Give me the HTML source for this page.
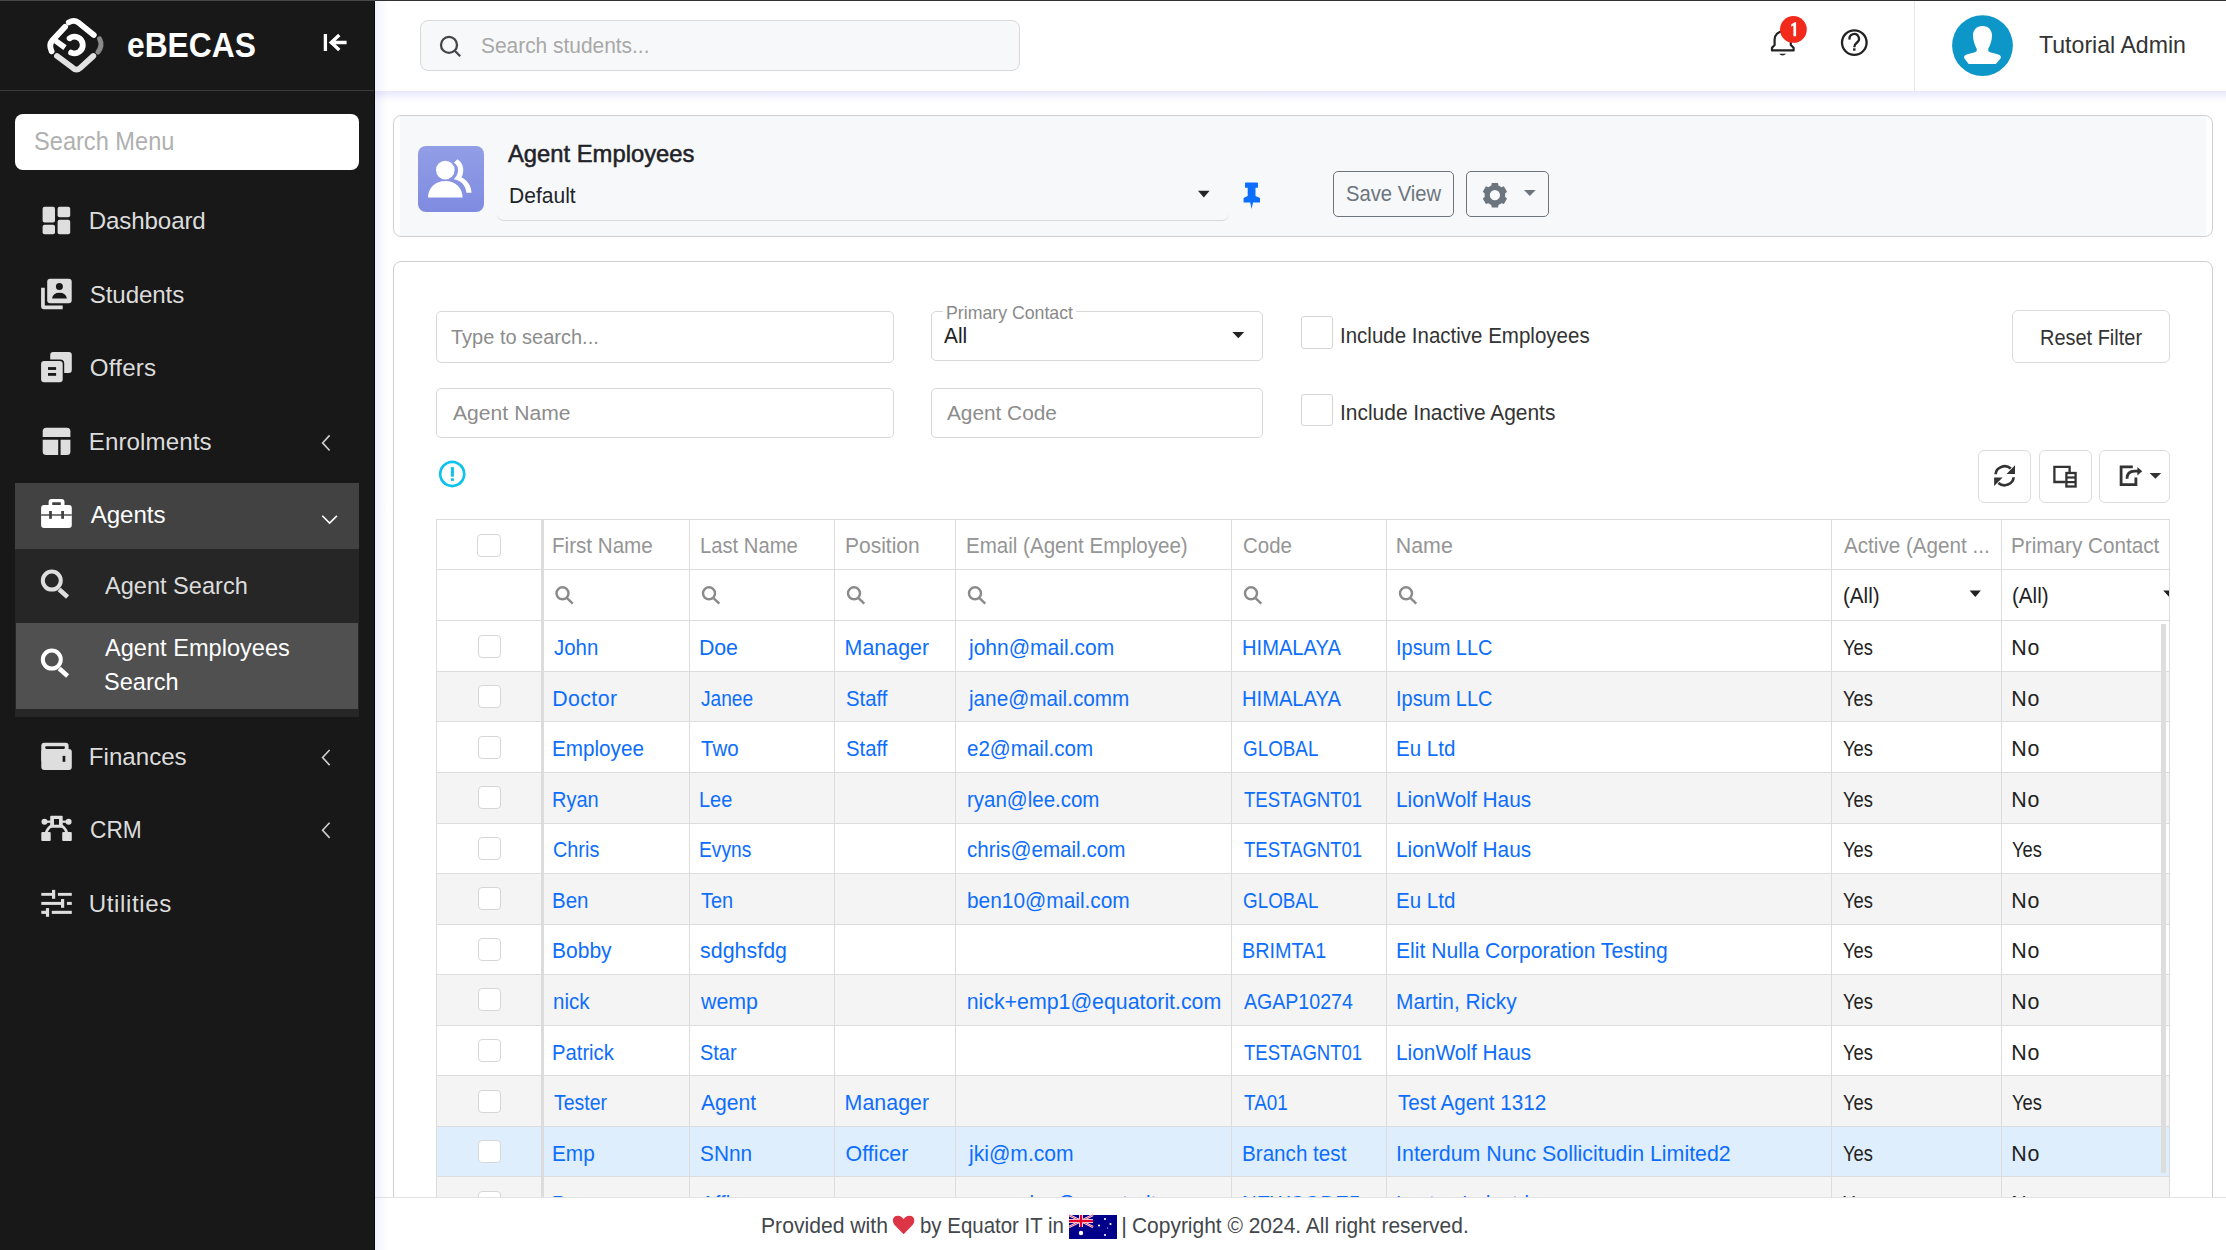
<!DOCTYPE html>
<html><head><meta charset="utf-8"><title>Agent Employees</title>
<style>
*{box-sizing:border-box;margin:0;padding:0}
html,body{width:2226px;height:1250px;overflow:hidden;background:#fff;font-family:"Liberation Sans",sans-serif}
.a{position:absolute}
.t{position:absolute;line-height:1;white-space:nowrap}
#clip{position:absolute;left:0;top:0;width:2226px;height:1197px;overflow:hidden}
#foot{position:absolute;left:375px;top:1197px;width:1851px;height:53px;background:#fff;border-top:1px solid #e3e3e3}
svg.ov{position:absolute;left:0;top:0;width:2226px;height:1250px}
</style></head><body>
<div class="a" style="left:0px;top:0px;width:375px;height:1250px;background:#181818"></div><div class="a" style="left:374px;top:0px;width:1px;height:1250px;background:#070707"></div><div class="a" style="left:0px;top:90px;width:374px;height:1px;background:#3a3a3a"></div><div class="a" style="left:15px;top:113.5px;width:344px;height:56.5px;background:#fff;border-radius:8px"></div><div class="a" style="left:15px;top:483px;width:344px;height:66px;background:#424242"></div><div class="a" style="left:15px;top:549px;width:344px;height:168px;background:#262626"></div><div class="a" style="left:16px;top:623px;width:342px;height:86px;background:#505050"></div><div class="a" style="left:375px;top:91px;width:12px;height:1159px;background:linear-gradient(to right,rgba(110,110,235,.11),rgba(110,110,235,0))"></div><div class="a" style="left:375px;top:91px;width:1851px;height:12px;background:linear-gradient(to bottom,rgba(110,110,235,.17),rgba(110,110,235,.04) 60%,rgba(110,110,235,0))"></div><div class="a" style="left:375px;top:0px;width:1851px;height:91px;background:#fff"></div><div class="a" style="left:375px;top:0px;width:12px;height:91px;background:linear-gradient(to right,rgba(110,110,235,.10),rgba(110,110,235,0))"></div><div class="a" style="left:0px;top:0px;width:375px;height:1px;background:#474747"></div><div class="a" style="left:375px;top:0px;width:1851px;height:1px;background:#303232"></div><div class="a" style="left:420px;top:20px;width:600px;height:51px;background:#f7f8fa;border:1px solid #d9d9d9;border-radius:8px"></div><div class="a" style="left:1914px;top:1px;width:1px;height:90px;background:#e8e8e8"></div><div class="a" style="left:393px;top:115px;width:1820px;height:122px;background:#fff;border:1px solid #cfcfcf;border-radius:8px"></div><div class="a" style="left:400px;top:116px;width:1806px;height:120px;background:#f7f8fa"></div><div class="a" style="left:418px;top:146px;width:66px;height:66px;background:linear-gradient(#929ee6,#7f8be0);border-radius:8px"></div><div class="a" style="left:497px;top:190px;width:732px;height:31px;border-bottom:1px solid #d8d8d8;border-radius:0 0 7px 7px"></div><div class="a" style="left:1333px;top:171px;width:121px;height:45.5px;border:1.2px solid #6c757d;border-radius:5px"></div><div class="a" style="left:1466px;top:171px;width:83px;height:45.5px;border:1.2px solid #6c757d;border-radius:5px"></div><div class="a" style="left:393px;top:261px;width:1820px;height:1039px;background:#fff;border:1px solid #cfcfcf;border-radius:8px"></div><div class="a" style="left:436px;top:310.5px;width:458px;height:52.0px;background:#fff;border:1px solid #d8d8d8;border-radius:5px"></div><div class="a" style="left:436px;top:387.5px;width:458px;height:50.0px;background:#fff;border:1px solid #d8d8d8;border-radius:5px"></div><div class="a" style="left:930.5px;top:310.5px;width:332.5px;height:50.0px;background:#fff;border:1px solid #d8d8d8;border-radius:5px"></div><div class="a" style="left:943px;top:300px;width:133px;height:15px;background:#fff"></div><div class="a" style="left:930.5px;top:387.5px;width:332.5px;height:50.0px;background:#fff;border:1px solid #d8d8d8;border-radius:5px"></div><div class="a" style="left:1300.5px;top:316px;width:32.0px;height:32.5px;background:#fff;border:1px solid #d4d4d4;border-radius:3px"></div><div class="a" style="left:1300.5px;top:393.5px;width:32.0px;height:32.0px;background:#fff;border:1px solid #d4d4d4;border-radius:3px"></div><div class="a" style="left:2012px;top:310px;width:158px;height:53px;background:#fff;border:1px solid #dcdcdc;border-radius:6px"></div><div class="a" style="left:1978px;top:450px;width:53px;height:53px;background:#fff;border:1px solid #dcdcdc;border-radius:6px"></div><div class="a" style="left:2039px;top:450px;width:53px;height:53px;background:#fff;border:1px solid #dcdcdc;border-radius:6px"></div><div class="a" style="left:2099px;top:450px;width:71px;height:53px;background:#fff;border:1px solid #dcdcdc;border-radius:6px"></div>
<div id="clip"><div class="a" style="left:436px;top:671px;width:1733px;height:50px;background:#f4f4f4"></div><div class="a" style="left:436px;top:772px;width:1733px;height:51px;background:#f4f4f4"></div><div class="a" style="left:436px;top:873px;width:1733px;height:51px;background:#f4f4f4"></div><div class="a" style="left:436px;top:974px;width:1733px;height:51px;background:#f4f4f4"></div><div class="a" style="left:436px;top:1075px;width:1733px;height:51px;background:#f4f4f4"></div><div class="a" style="left:436px;top:1126px;width:1733px;height:50px;background:#dfeefc"></div><div class="a" style="left:436px;top:1176px;width:1733px;height:51px;background:#f4f4f4"></div><div class="a" style="left:436px;top:519px;width:1734px;height:1px;background:#dcdcdc"></div><div class="a" style="left:436px;top:569px;width:1734px;height:1px;background:#dcdcdc"></div><div class="a" style="left:436px;top:620px;width:1734px;height:1px;background:#dcdcdc"></div><div class="a" style="left:436px;top:671px;width:1734px;height:1px;background:#dcdcdc"></div><div class="a" style="left:436px;top:721px;width:1734px;height:1px;background:#dcdcdc"></div><div class="a" style="left:436px;top:772px;width:1734px;height:1px;background:#dcdcdc"></div><div class="a" style="left:436px;top:823px;width:1734px;height:1px;background:#dcdcdc"></div><div class="a" style="left:436px;top:873px;width:1734px;height:1px;background:#dcdcdc"></div><div class="a" style="left:436px;top:924px;width:1734px;height:1px;background:#dcdcdc"></div><div class="a" style="left:436px;top:974px;width:1734px;height:1px;background:#dcdcdc"></div><div class="a" style="left:436px;top:1025px;width:1734px;height:1px;background:#dcdcdc"></div><div class="a" style="left:436px;top:1075px;width:1734px;height:1px;background:#dcdcdc"></div><div class="a" style="left:436px;top:1126px;width:1734px;height:1px;background:#dcdcdc"></div><div class="a" style="left:436px;top:1176px;width:1734px;height:1px;background:#dcdcdc"></div><div class="a" style="left:436px;top:1227px;width:1734px;height:1px;background:#dcdcdc"></div><div class="a" style="left:436px;top:519px;width:1px;height:781px;background:#dcdcdc"></div><div class="a" style="left:541px;top:519px;width:1px;height:781px;background:#dcdcdc"></div><div class="a" style="left:689px;top:519px;width:1px;height:781px;background:#dcdcdc"></div><div class="a" style="left:834px;top:519px;width:1px;height:781px;background:#dcdcdc"></div><div class="a" style="left:955px;top:519px;width:1px;height:781px;background:#dcdcdc"></div><div class="a" style="left:1231px;top:519px;width:1px;height:781px;background:#dcdcdc"></div><div class="a" style="left:1386px;top:519px;width:1px;height:781px;background:#dcdcdc"></div><div class="a" style="left:1831px;top:519px;width:1px;height:781px;background:#dcdcdc"></div><div class="a" style="left:2001px;top:519px;width:1px;height:781px;background:#dcdcdc"></div><div class="a" style="left:2169px;top:519px;width:1px;height:781px;background:#dcdcdc"></div><div class="a" style="left:541px;top:519px;width:2.5px;height:781px;background:#dcdcdc"></div><div class="a" style="left:477px;top:533.5px;width:24px;height:23.5px;background:#fff;border:1px solid #d6d6d6;border-radius:4px"></div><div class="a" style="left:477.5px;top:634.6px;width:23.0px;height:23.0px;background:#fff;border:1px solid #d6d6d6;border-radius:4px"></div><div class="a" style="left:477.5px;top:685.1px;width:23.0px;height:23.0px;background:#fff;border:1px solid #d6d6d6;border-radius:4px"></div><div class="a" style="left:477.5px;top:735.7px;width:23.0px;height:23.0px;background:#fff;border:1px solid #d6d6d6;border-radius:4px"></div><div class="a" style="left:477.5px;top:786.2px;width:23.0px;height:23.0px;background:#fff;border:1px solid #d6d6d6;border-radius:4px"></div><div class="a" style="left:477.5px;top:836.8px;width:23.0px;height:23.0px;background:#fff;border:1px solid #d6d6d6;border-radius:4px"></div><div class="a" style="left:477.5px;top:887.3px;width:23.0px;height:23.0px;background:#fff;border:1px solid #d6d6d6;border-radius:4px"></div><div class="a" style="left:477.5px;top:937.9px;width:23.0px;height:23.0px;background:#fff;border:1px solid #d6d6d6;border-radius:4px"></div><div class="a" style="left:477.5px;top:988.4px;width:23.0px;height:23.0px;background:#fff;border:1px solid #d6d6d6;border-radius:4px"></div><div class="a" style="left:477.5px;top:1039.0px;width:23.0px;height:23.0px;background:#fff;border:1px solid #d6d6d6;border-radius:4px"></div><div class="a" style="left:477.5px;top:1089.5px;width:23.0px;height:23.0px;background:#fff;border:1px solid #d6d6d6;border-radius:4px"></div><div class="a" style="left:477.5px;top:1140.0px;width:23.0px;height:23.0px;background:#fff;border:1px solid #d6d6d6;border-radius:4px"></div><div class="a" style="left:477.5px;top:1190.6px;width:23.0px;height:23.0px;background:#fff;border:1px solid #d6d6d6;border-radius:4px"></div><div class="a" style="left:2160.5px;top:624px;width:5.5px;height:549px;background:#dddddd"></div><div class="t" style="left:554.20px;top:638.14px;font-size:21.37px;color:#0d6efd;transform:scaleX(0.9556);transform-origin:0 0;">John</div><div class="t" style="left:699.00px;top:638.14px;font-size:21.37px;color:#0d6efd;letter-spacing:-0.100px;">Doe</div><div class="t" style="left:844.60px;top:638.14px;font-size:21.37px;color:#0d6efd;letter-spacing:0.033px;">Manager</div><div class="t" style="left:968.68px;top:638.14px;font-size:21.37px;color:#0d6efd;transform:scaleX(0.9844);transform-origin:0 0;">john@mail.com</div><div class="t" style="left:1241.61px;top:638.14px;font-size:21.37px;color:#0d6efd;transform:scaleX(0.9427);transform-origin:0 0;">HIMALAYA</div><div class="t" style="left:1396.23px;top:638.14px;font-size:21.37px;color:#0d6efd;transform:scaleX(0.9340);transform-origin:0 0;">Ipsum LLC</div><div class="t" style="left:1842.64px;top:638.14px;font-size:21.37px;color:#222;transform:scaleX(0.8576);transform-origin:0 0;">Yes</div><div class="t" style="left:2011.30px;top:638.14px;font-size:21.37px;color:#222;letter-spacing:0.800px;">No</div><div class="t" style="left:552.20px;top:688.68px;font-size:21.37px;color:#0d6efd;letter-spacing:0.400px;">Doctor</div><div class="t" style="left:701.00px;top:688.68px;font-size:21.37px;color:#0d6efd;transform:scaleX(0.8947);transform-origin:0 0;">Janee</div><div class="t" style="left:845.65px;top:688.68px;font-size:21.37px;color:#0d6efd;transform:scaleX(0.9512);transform-origin:0 0;">Staff</div><div class="t" style="left:968.67px;top:688.68px;font-size:21.37px;color:#0d6efd;transform:scaleX(0.9697);transform-origin:0 0;">jane@mail.comm</div><div class="t" style="left:1241.61px;top:688.68px;font-size:21.37px;color:#0d6efd;transform:scaleX(0.9427);transform-origin:0 0;">HIMALAYA</div><div class="t" style="left:1396.23px;top:688.68px;font-size:21.37px;color:#0d6efd;transform:scaleX(0.9340);transform-origin:0 0;">Ipsum LLC</div><div class="t" style="left:1842.64px;top:688.68px;font-size:21.37px;color:#222;transform:scaleX(0.8576);transform-origin:0 0;">Yes</div><div class="t" style="left:2011.30px;top:688.68px;font-size:21.37px;color:#222;letter-spacing:0.800px;">No</div><div class="t" style="left:552.27px;top:739.23px;font-size:21.37px;color:#0d6efd;transform:scaleX(0.9674);transform-origin:0 0;">Employee</div><div class="t" style="left:701.00px;top:739.23px;font-size:21.37px;color:#0d6efd;transform:scaleX(0.9605);transform-origin:0 0;">Two</div><div class="t" style="left:845.65px;top:739.23px;font-size:21.37px;color:#0d6efd;transform:scaleX(0.9512);transform-origin:0 0;">Staff</div><div class="t" style="left:966.74px;top:739.23px;font-size:21.37px;color:#0d6efd;transform:scaleX(0.9628);transform-origin:0 0;">e2@mail.com</div><div class="t" style="left:1242.62px;top:739.23px;font-size:21.37px;color:#0d6efd;transform:scaleX(0.8821);transform-origin:0 0;">GLOBAL</div><div class="t" style="left:1396.18px;top:739.23px;font-size:21.37px;color:#0d6efd;transform:scaleX(0.9603);transform-origin:0 0;">Eu Ltd</div><div class="t" style="left:1842.64px;top:739.23px;font-size:21.37px;color:#222;transform:scaleX(0.8576);transform-origin:0 0;">Yes</div><div class="t" style="left:2011.30px;top:739.23px;font-size:21.37px;color:#222;letter-spacing:0.800px;">No</div><div class="t" style="left:552.33px;top:789.77px;font-size:21.37px;color:#0d6efd;transform:scaleX(0.9362);transform-origin:0 0;">Ryan</div><div class="t" style="left:699.13px;top:789.77px;font-size:21.37px;color:#0d6efd;transform:scaleX(0.9333);transform-origin:0 0;">Lee</div><div class="t" style="left:966.74px;top:789.77px;font-size:21.37px;color:#0d6efd;transform:scaleX(0.9596);transform-origin:0 0;">ryan@lee.com</div><div class="t" style="left:1243.50px;top:789.77px;font-size:21.37px;color:#0d6efd;transform:scaleX(0.8681);transform-origin:0 0;">TESTAGNT01</div><div class="t" style="left:1396.15px;top:789.77px;font-size:21.37px;color:#0d6efd;transform:scaleX(0.9757);transform-origin:0 0;">LionWolf Haus</div><div class="t" style="left:1842.64px;top:789.77px;font-size:21.37px;color:#222;transform:scaleX(0.8576);transform-origin:0 0;">Yes</div><div class="t" style="left:2011.30px;top:789.77px;font-size:21.37px;color:#222;letter-spacing:0.800px;">No</div><div class="t" style="left:553.27px;top:840.32px;font-size:21.37px;color:#0d6efd;transform:scaleX(0.9292);transform-origin:0 0;">Chris</div><div class="t" style="left:699.20px;top:840.32px;font-size:21.37px;color:#0d6efd;transform:scaleX(0.8982);transform-origin:0 0;">Evyns</div><div class="t" style="left:966.74px;top:840.32px;font-size:21.37px;color:#0d6efd;transform:scaleX(0.9648);transform-origin:0 0;">chris@email.com</div><div class="t" style="left:1243.50px;top:840.32px;font-size:21.37px;color:#0d6efd;transform:scaleX(0.8681);transform-origin:0 0;">TESTAGNT01</div><div class="t" style="left:1396.15px;top:840.32px;font-size:21.37px;color:#0d6efd;transform:scaleX(0.9757);transform-origin:0 0;">LionWolf Haus</div><div class="t" style="left:1842.64px;top:840.32px;font-size:21.37px;color:#222;transform:scaleX(0.8576);transform-origin:0 0;">Yes</div><div class="t" style="left:2012.44px;top:840.32px;font-size:21.37px;color:#222;transform:scaleX(0.8576);transform-origin:0 0;">Yes</div><div class="t" style="left:552.28px;top:890.86px;font-size:21.37px;color:#0d6efd;transform:scaleX(0.9600);transform-origin:0 0;">Ben</div><div class="t" style="left:701.00px;top:890.86px;font-size:21.37px;color:#0d6efd;transform:scaleX(0.9333);transform-origin:0 0;">Ten</div><div class="t" style="left:966.72px;top:890.86px;font-size:21.37px;color:#0d6efd;transform:scaleX(0.9774);transform-origin:0 0;">ben10@mail.com</div><div class="t" style="left:1242.62px;top:890.86px;font-size:21.37px;color:#0d6efd;transform:scaleX(0.8821);transform-origin:0 0;">GLOBAL</div><div class="t" style="left:1396.18px;top:890.86px;font-size:21.37px;color:#0d6efd;transform:scaleX(0.9603);transform-origin:0 0;">Eu Ltd</div><div class="t" style="left:1842.64px;top:890.86px;font-size:21.37px;color:#222;transform:scaleX(0.8576);transform-origin:0 0;">Yes</div><div class="t" style="left:2011.30px;top:890.86px;font-size:21.37px;color:#222;letter-spacing:0.800px;">No</div><div class="t" style="left:552.23px;top:941.41px;font-size:21.37px;color:#0d6efd;transform:scaleX(0.9847);transform-origin:0 0;">Bobby</div><div class="t" style="left:700.00px;top:941.41px;font-size:21.37px;color:#0d6efd;letter-spacing:0.043px;">sdghsfdg</div><div class="t" style="left:1241.65px;top:941.41px;font-size:21.37px;color:#0d6efd;transform:scaleX(0.9273);transform-origin:0 0;">BRIMTA1</div><div class="t" style="left:1396.12px;top:941.41px;font-size:21.37px;color:#0d6efd;transform:scaleX(0.9879);transform-origin:0 0;">Elit Nulla Corporation Testing</div><div class="t" style="left:1842.64px;top:941.41px;font-size:21.37px;color:#222;transform:scaleX(0.8576);transform-origin:0 0;">Yes</div><div class="t" style="left:2011.30px;top:941.41px;font-size:21.37px;color:#222;letter-spacing:0.800px;">No</div><div class="t" style="left:553.24px;top:991.95px;font-size:21.37px;color:#0d6efd;transform:scaleX(0.9595);transform-origin:0 0;">nick</div><div class="t" style="left:701.00px;top:991.95px;font-size:21.37px;color:#0d6efd;">wemp</div><div class="t" style="left:966.70px;top:991.95px;font-size:21.37px;color:#0d6efd;letter-spacing:-0.018px;">nick+emp1@equatorit.com</div><div class="t" style="left:1243.50px;top:991.95px;font-size:21.37px;color:#0d6efd;transform:scaleX(0.9161);transform-origin:0 0;">AGAP10274</div><div class="t" style="left:1396.15px;top:991.95px;font-size:21.37px;color:#0d6efd;transform:scaleX(0.9769);transform-origin:0 0;">Martin, Ricky</div><div class="t" style="left:1842.64px;top:991.95px;font-size:21.37px;color:#222;transform:scaleX(0.8576);transform-origin:0 0;">Yes</div><div class="t" style="left:2011.30px;top:991.95px;font-size:21.37px;color:#222;letter-spacing:0.800px;">No</div><div class="t" style="left:552.30px;top:1042.50px;font-size:21.37px;color:#0d6efd;transform:scaleX(0.9476);transform-origin:0 0;">Patrick</div><div class="t" style="left:700.07px;top:1042.50px;font-size:21.37px;color:#0d6efd;transform:scaleX(0.9342);transform-origin:0 0;">Star</div><div class="t" style="left:1243.50px;top:1042.50px;font-size:21.37px;color:#0d6efd;transform:scaleX(0.8681);transform-origin:0 0;">TESTAGNT01</div><div class="t" style="left:1396.15px;top:1042.50px;font-size:21.37px;color:#0d6efd;transform:scaleX(0.9757);transform-origin:0 0;">LionWolf Haus</div><div class="t" style="left:1842.64px;top:1042.50px;font-size:21.37px;color:#222;transform:scaleX(0.8576);transform-origin:0 0;">Yes</div><div class="t" style="left:2011.30px;top:1042.50px;font-size:21.37px;color:#222;letter-spacing:0.800px;">No</div><div class="t" style="left:554.20px;top:1093.04px;font-size:21.37px;color:#0d6efd;transform:scaleX(0.9103);transform-origin:0 0;">Tester</div><div class="t" style="left:701.00px;top:1093.04px;font-size:21.37px;color:#0d6efd;transform:scaleX(0.9893);transform-origin:0 0;">Agent</div><div class="t" style="left:844.60px;top:1093.04px;font-size:21.37px;color:#0d6efd;letter-spacing:0.033px;">Manager</div><div class="t" style="left:1243.50px;top:1093.04px;font-size:21.37px;color:#0d6efd;transform:scaleX(0.8837);transform-origin:0 0;">TA01</div><div class="t" style="left:1398.10px;top:1093.04px;font-size:21.37px;color:#0d6efd;transform:scaleX(0.9678);transform-origin:0 0;">Test Agent 1312</div><div class="t" style="left:1842.64px;top:1093.04px;font-size:21.37px;color:#222;transform:scaleX(0.8576);transform-origin:0 0;">Yes</div><div class="t" style="left:2012.44px;top:1093.04px;font-size:21.37px;color:#222;transform:scaleX(0.8576);transform-origin:0 0;">Yes</div><div class="t" style="left:552.25px;top:1143.59px;font-size:21.37px;color:#0d6efd;transform:scaleX(0.9732);transform-origin:0 0;">Emp</div><div class="t" style="left:700.03px;top:1143.59px;font-size:21.37px;color:#0d6efd;transform:scaleX(0.9745);transform-origin:0 0;">SNnn</div><div class="t" style="left:845.60px;top:1143.59px;font-size:21.37px;color:#0d6efd;letter-spacing:0.050px;">Officer</div><div class="t" style="left:968.69px;top:1143.59px;font-size:21.37px;color:#0d6efd;transform:scaleX(0.9877);transform-origin:0 0;">jki@m.com</div><div class="t" style="left:1241.57px;top:1143.59px;font-size:21.37px;color:#0d6efd;transform:scaleX(0.9660);transform-origin:0 0;">Branch test</div><div class="t" style="left:1396.10px;top:1143.59px;font-size:21.37px;color:#0d6efd;letter-spacing:-0.006px;">Interdum Nunc Sollicitudin Limited2</div><div class="t" style="left:1842.64px;top:1143.59px;font-size:21.37px;color:#222;transform:scaleX(0.8576);transform-origin:0 0;">Yes</div><div class="t" style="left:2011.30px;top:1143.59px;font-size:21.37px;color:#222;letter-spacing:0.800px;">No</div><div class="t" style="left:552.28px;top:1194.13px;font-size:21.37px;color:#0d6efd;transform:scaleX(0.9583);transform-origin:0 0;">Peppa</div><div class="t" style="left:701.00px;top:1194.13px;font-size:21.37px;color:#0d6efd;transform:scaleX(0.9583);transform-origin:0 0;">Afflex</div><div class="t" style="left:966.74px;top:1194.13px;font-size:21.37px;color:#0d6efd;transform:scaleX(0.9583);transform-origin:0 0;">peppa.lex@equatorit.com</div><div class="t" style="left:1241.58px;top:1194.13px;font-size:21.37px;color:#0d6efd;transform:scaleX(0.9583);transform-origin:0 0;">NEWCODE5</div><div class="t" style="left:1396.18px;top:1194.13px;font-size:21.37px;color:#0d6efd;transform:scaleX(0.9583);transform-origin:0 0;">Lectus Industries</div><div class="t" style="left:1842.64px;top:1194.13px;font-size:21.37px;color:#222;transform:scaleX(0.8576);transform-origin:0 0;">Yes</div><div class="t" style="left:2011.30px;top:1194.13px;font-size:21.37px;color:#222;letter-spacing:0.800px;">No</div></div>
<svg class="ov" width="2226" height="1250" viewBox="0 0 2226 1250"><g fill="none" stroke-linecap="round" stroke-width="5.8"><path d="M68.8 22.4 Q74 19.2 78.3 22.6 L93.8 35" stroke="#fff"/><path d="M99.6 38.8 Q103 45.3 98 52" stroke="#8a8a8a" stroke-width="5"/><path d="M93.3 56 L80.3 67.8 Q76.5 71.3 72.7 67.8 L57 56" stroke="#e2e2e2"/><path d="M65.1 26.8 L52.3 40.5 Q48.6 44.8 51.6 51.3" stroke="#fff"/><path d="M55.5 40.8 L65 47.6" stroke="#fff" stroke-linecap="butt" stroke-width="5.6"/><path d="M69.6 38.3 A8.3 8.3 0 1 1 71.1 52.6" stroke="#fff"/></g><g stroke="#fff" stroke-width="3.3" fill="none"><path d="M325.4 34 V51"/><path d="M339.3 35 L331.2 42.5 L339.3 50 M331 42.5 H346.6"/></g><g fill="#dedede"><rect x="42.6" y="206.8" width="12.4" height="15.6" rx="2"/><rect x="57.6" y="206.8" width="12.6" height="10.4" rx="2"/><rect x="42.6" y="224.8" width="12.4" height="9.4" rx="2"/><rect x="57.6" y="219.7" width="12.6" height="14.5" rx="2"/></g><g fill="#dedede"><rect x="47.2" y="278.8" width="24.5" height="24.5" rx="3"/><path d="M41.1 287.8 H44.8 V305.6 H62.7 V309.2 H44 Q41.1 309.2 41.1 306.3 Z"/></g><g fill="#181818"><circle cx="59.4" cy="286.6" r="3.5"/><path d="M52 298.6 Q53 292.8 59.45 292.8 Q65.9 292.8 66.9 298.6 Z"/></g><rect x="50.2" y="352" width="21.6" height="21" rx="3" fill="#dedede"/><rect x="39.6" y="359.5" width="24.6" height="24.2" rx="4" fill="#181818"/><rect x="41.1" y="361" width="21.6" height="21.2" rx="3" fill="#dedede"/><g fill="#181818"><rect x="48" y="367.1" width="8.1" height="2.8"/><rect x="48" y="373" width="8.1" height="2.8"/></g><g fill="#dedede"><path d="M42.7 437 V431.3 Q42.7 427.8 46.2 427.8 H66.9 Q70.4 427.8 70.4 431.3 V437 Z"/><path d="M42.7 439.8 H58.2 V455 H46.2 Q42.7 455 42.7 451.5 Z"/><path d="M60.6 439.8 H70.4 V451.5 Q70.4 455 66.9 455 H60.6 Z"/></g><g fill="#fff"><path d="M48.6 505 V502 Q48.6 499 51.6 499 H61.5 Q64.5 499 64.5 502 V505 H60.8 V502.2 H52.2 V505 Z"/><rect x="41.1" y="504.9" width="30.7" height="23.1" rx="3"/></g><g fill="#5a5a5a"><rect x="41.1" y="514.2" width="30.7" height="1.6"/></g><g fill="#424242"><rect x="49.1" y="511" width="2.8" height="7.8"/><rect x="61.2" y="511" width="2.8" height="7.8"/></g><g stroke="#dedede" fill="none"><circle cx="51.8" cy="580.6" r="9" stroke-width="4"/><path d="M59.2 589.6 L67.6 597" stroke-width="4.6"/></g><g stroke="#fff" fill="none"><circle cx="51.8" cy="659.6" r="9" stroke-width="4"/><path d="M59.2 668.6 L67.6 676" stroke-width="4.6"/></g><g fill="#dedede"><rect x="41.3" y="742.8" width="27.3" height="20" rx="3"/><rect x="41.3" y="749" width="30.5" height="21" rx="3"/></g><g fill="#181818"><rect x="45.2" y="746.3" width="19.8" height="2.6" rx="1.3"/><rect x="62.6" y="755.9" width="2.7" height="5.9"/></g><g fill="#dedede"><rect x="50.2" y="815.8" width="12.5" height="12" rx="1"/><circle cx="44.5" cy="821.7" r="3"/><circle cx="68.6" cy="821.7" r="3"/><rect x="44.5" y="820.6" width="24" height="2.2"/><rect x="41.3" y="832" width="9.4" height="9" rx="1"/><rect x="62.2" y="832" width="9.6" height="9" rx="1"/></g><rect x="54" y="819" width="5" height="5.7" fill="#181818"/><g stroke="#dedede" stroke-width="2.6" fill="none"><path d="M52 825.5 Q47.5 828 46 833"/><path d="M61 825.5 Q65.5 828 67 833"/></g><g fill="#dedede"><rect x="41.3" y="892.9" width="11" height="2.9"/><rect x="52" y="889.9" width="3.2" height="8.9"/><rect x="57.9" y="892.9" width="13.9" height="2.9"/><rect x="41.3" y="901.9" width="20" height="3"/><rect x="61" y="899" width="3.2" height="8.8"/><rect x="66.9" y="901.9" width="4.9" height="3"/><rect x="41.3" y="910.8" width="5" height="3.1"/><rect x="45.9" y="908.1" width="3.2" height="8.7"/><rect x="51.8" y="910.8" width="20" height="3.1"/></g><path d="M329.6 435.4 L322.6 442.9 L329.6 450.5" stroke="#d0d0d0" stroke-width="1.6" fill="none"/><path d="M329.6 750.0 L322.6 757.5 L329.6 765.1" stroke="#d0d0d0" stroke-width="1.6" fill="none"/><path d="M329.6 822.8 L322.6 830.3 L329.6 837.9" stroke="#d0d0d0" stroke-width="1.6" fill="none"/><path d="M322.3 515.8 L329.6 523.1 L336.9 515.9" stroke="#fff" stroke-width="1.6" fill="none"/><g stroke="#41464b" fill="none" stroke-width="2.3"><circle cx="449" cy="44.9" r="8"/><path d="M454.8 50.8 L460.2 56.2"/></g><g stroke="#222" stroke-width="2.2" fill="none" stroke-linejoin="round"><path d="M1772 50.4 H1793.6 V47.8 L1790.8 45 V39.5 A8.1 8.1 0 0 0 1774.6 39.5 V45 L1772 47.8 Z"/></g><path d="M1779 53.8 Q1782.6 57.4 1786.2 53.8 Z" fill="#222"/><circle cx="1793.4" cy="29.4" r="13.4" fill="#f22a1c"/><path d="M1791.2 24.5 L1794.6 22.2 H1796.1 V36.3 H1793.4 V25.6 L1791.2 26.8 Z" fill="#fff"/><g stroke="#222" stroke-width="2.3" fill="none"><circle cx="1854.3" cy="42.6" r="12.3"/><path d="M1849.6 39.6 A4.7 4.7 0 1 1 1857 42.5 Q1854.3 44.6 1854.3 47.3"/></g><rect x="1853.1" y="48.3" width="2.4" height="2.4" fill="#222"/><circle cx="1982.5" cy="45.6" r="30.4" fill="#0d96c8"/><path fill="#fff" d="M1982.5 25.9 C1976.5 25.9 1973 30 1973 35.5 C1973 40 1974.5 44.5 1976.8 49 L1976.6 51.2 C1974 53 1968.5 53.6 1965.6 55 C1964.2 55.8 1963.8 57.3 1964.3 58.2 L1968.7 64 H1995.9 L2000.7 58.2 C2001.2 57.3 2000.8 55.8 1999.4 55 C1996.5 53.6 1991 53 1988.4 51.2 L1988.2 49 C1990.5 44.5 1992 40 1992 35.5 C1992 30 1988.5 25.9 1982.5 25.9 Z"/><g fill="#fff"><circle cx="445.3" cy="170.1" r="9.3"/><path d="M428 197.6 C428 188 435 181 445.3 181 C455.6 181 462.6 188 462.6 197.6 Z"/><path d="M457.4 159.2 C461 161.5 463.4 165.5 463.2 170.3 C463.1 173.5 462.4 175.6 461.5 177.3 C467.3 180.3 471.3 185.8 471.5 192.8 L466.4 192.8 C465.8 185.5 460.8 180 453.6 179.3 C456.6 176.8 458.2 173.5 458.1 170.1 C458 166.6 456.5 164.2 453.9 162.7 Z"/></g><path d="M1198 190.7 H1209.6 L1203.8 197.4 Z" fill="#212529"/><path fill="#0d6efd" d="M1246 182.5 H1257 Q1258 182.5 1258 183.5 V187.7 H1255.5 V196 L1260 198 V202.4 H1253 L1251.6 209 L1250.2 202.4 H1243.6 V198 L1247.7 196 V187.7 H1245 V183.5 Q1245 182.5 1246 182.5 Z"/><path fill="#6c757d" fill-rule="evenodd" d="M1491.34 185.43 L1491.75 183.00 L1498.05 183.00 L1498.46 185.43 L1501.58 187.23 L1503.89 186.37 L1507.04 191.83 L1505.14 193.39 L1505.14 197.01 L1507.04 198.57 L1503.89 204.03 L1501.58 203.17 L1498.46 204.97 L1498.05 207.40 L1491.75 207.40 L1491.34 204.97 L1488.22 203.17 L1485.91 204.03 L1482.76 198.57 L1484.66 197.01 L1484.66 193.39 L1482.76 191.83 L1485.91 186.37 L1488.22 187.23 Z M1500.0 195.2 A5.1 5.1 0 1 0 1489.8000000000002 195.2 A5.1 5.1 0 1 0 1500.0 195.2 Z"/><path d="M1523.9 190 H1535.7 L1529.8 195.9 Z" fill="#6c757d"/><path d="M1232.4 332 H1244.2 L1238.3 338.2 Z" fill="#222"/><g fill="#0dc2ec"><path fill-rule="evenodd" d="M452.2 460.6 A13.4 13.4 0 1 1 452.19 460.6 Z M452.2 463.3 A10.7 10.7 0 1 0 452.21 463.3 Z"/><rect x="450.9" y="467.1" width="3" height="9.6"/><rect x="450.9" y="478.3" width="3" height="2.6"/></g><g stroke="#333" stroke-width="2.7" fill="none"><path d="M1995.6 474.2 A9 8.3 0 0 1 2010.8 468.6"/><path d="M2013.6 477.3 A9 8.3 0 0 1 1998.4 482.9"/></g><g fill="#333"><path d="M2015 465.3 V474 H2006.5 Z"/><path d="M1994.1 486.1 V477.4 H2002.6 Z"/></g><g stroke="#333" stroke-width="2.3" fill="none"><path d="M2065.5 482 H2054.4 V466.8 H2069.6 V472.5"/><rect x="2066.4" y="473" width="9.2" height="13.5"/></g><g fill="#333"><rect x="2066.4" y="476.4" width="9.2" height="2.2"/><rect x="2066.4" y="481" width="9.2" height="2.2"/></g><g stroke="#333" stroke-width="2.8" fill="none"><path d="M2132.8 466.9 H2121.1 V484.7 H2135.9 V477.6"/><path d="M2127 478.7 Q2127 471.2 2134.8 471.2 H2139"/></g><path d="M2137.4 467 L2142.2 471.3 L2137.4 475.6 Z" fill="#333"/><path d="M2149.6 473 H2161.2 L2155.4 478.7 Z" fill="#333"/><g stroke="#8a8a8a" stroke-width="2.4" fill="none"><circle cx="562.5" cy="593.3" r="6"/><path d="M567.0 598.1 L572.8 603.6"/></g><g stroke="#8a8a8a" stroke-width="2.4" fill="none"><circle cx="709" cy="593.3" r="6"/><path d="M713.5 598.1 L719.3 603.6"/></g><g stroke="#8a8a8a" stroke-width="2.4" fill="none"><circle cx="854" cy="593.3" r="6"/><path d="M858.5 598.1 L864.3 603.6"/></g><g stroke="#8a8a8a" stroke-width="2.4" fill="none"><circle cx="975" cy="593.3" r="6"/><path d="M979.5 598.1 L985.3 603.6"/></g><g stroke="#8a8a8a" stroke-width="2.4" fill="none"><circle cx="1251" cy="593.3" r="6"/><path d="M1255.5 598.1 L1261.3 603.6"/></g><g stroke="#8a8a8a" stroke-width="2.4" fill="none"><circle cx="1406" cy="593.3" r="6"/><path d="M1410.5 598.1 L1416.3 603.6"/></g><path d="M1969.6 590.5 H1980.9 L1975.25 597 Z" fill="#222"/><path d="M2163.2 590.5 H2169 V596.7 Z" fill="#222"/></svg>
<div id="foot"></div><div class="a" style="left:375px;top:1197px;width:12px;height:53px;background:linear-gradient(to right,rgba(110,110,235,.10),rgba(110,110,235,0))"></div>
<svg class="ov" width="2226" height="1250" viewBox="0 0 2226 1250"><path fill="#dc3545" d="M903.6 1234.2 L894.6 1225 Q892.9 1223 892.9 1220.7 Q892.9 1215.7 898 1215.7 Q901.6 1215.7 903.6 1219.3 Q905.6 1215.7 909.2 1215.7 Q914.3 1215.7 914.3 1220.7 Q914.3 1223 912.6 1225 Z"/><rect x="1069" y="1215" width="48" height="24" fill="#00008b"/><g><rect x="1069" y="1215" width="24" height="12" fill="#00008b"/><path d="M1069 1215 L1093 1227 M1093 1215 L1069 1227" stroke="#fff" stroke-width="2.4"/><path d="M1069 1215 L1093 1227 M1093 1215 L1069 1227" stroke="#e4002b" stroke-width="0.8"/><path d="M1081 1215 V1227 M1069 1221 H1093" stroke="#fff" stroke-width="4"/><path d="M1081 1215 V1227 M1069 1221 H1093" stroke="#e4002b" stroke-width="2.4"/></g><g fill="#fff"><circle cx="1081" cy="1233" r="2.2"/><circle cx="1105" cy="1219" r="1.1"/><circle cx="1099" cy="1225.5" r="1.1"/><circle cx="1110.5" cy="1224" r="1.1"/><circle cx="1105" cy="1235" r="1.1"/><circle cx="1107.5" cy="1228" r=".6"/></g></svg>
<div class="t" style="left:127.09px;top:28.17px;font-size:34.74px;color:#fff;font-weight:bold;transform:scaleX(0.9144);transform-origin:0 0;">eBECAS</div><div class="t" style="left:33.75px;top:130.38px;font-size:24.85px;color:#b0b0b0;transform:scaleX(0.9503);transform-origin:0 0;">Search Menu</div><div class="t" style="left:88.80px;top:209.39px;font-size:24.13px;color:#dcdcdc;letter-spacing:-0.137px;">Dashboard</div><div class="t" style="left:89.80px;top:283.29px;font-size:24.13px;color:#dcdcdc;letter-spacing:-0.114px;">Students</div><div class="t" style="left:89.80px;top:355.99px;font-size:24.13px;color:#dcdcdc;letter-spacing:0.220px;">Offers</div><div class="t" style="left:88.80px;top:429.79px;font-size:24.13px;color:#dcdcdc;letter-spacing:0.089px;">Enrolments</div><div class="t" style="left:88.80px;top:745.09px;font-size:24.13px;color:#dcdcdc;">Finances</div><div class="t" style="left:89.86px;top:817.89px;font-size:24.13px;color:#dcdcdc;transform:scaleX(0.9423);transform-origin:0 0;">CRM</div><div class="t" style="left:88.80px;top:891.89px;font-size:24.13px;color:#dcdcdc;letter-spacing:0.588px;">Utilities</div><div class="t" style="left:90.70px;top:503.19px;font-size:24.13px;color:#fff;letter-spacing:-0.040px;">Agents</div><div class="t" style="left:105.40px;top:573.69px;font-size:24.13px;color:#dcdcdc;transform:scaleX(0.9766);transform-origin:0 0;">Agent Search</div><div class="t" style="left:105.40px;top:636.09px;font-size:24.13px;color:#fff;transform:scaleX(0.9777);transform-origin:0 0;">Agent Employees</div><div class="t" style="left:104.42px;top:669.69px;font-size:24.13px;color:#fff;transform:scaleX(0.9757);transform-origin:0 0;">Search</div><div class="t" style="left:480.91px;top:34.86px;font-size:21.22px;color:#a8a8a8;transform:scaleX(0.9851);transform-origin:0 0;">Search students...</div><div class="t" style="left:2039.00px;top:32.80px;font-size:24.71px;color:#333;transform:scaleX(0.9359);transform-origin:0 0;">Tutorial Admin</div><div class="t" style="left:508.40px;top:141.70px;font-size:24.71px;color:#1f2328;-webkit-text-stroke:0.55px #1f2328;transform:scaleX(0.9627);transform-origin:0 0;">Agent Employees</div><div class="t" style="left:508.98px;top:185.14px;font-size:21.95px;color:#212529;transform:scaleX(0.9588);transform-origin:0 0;">Default</div><div class="t" style="left:1345.57px;top:183.19px;font-size:21.66px;color:#6c757d;transform:scaleX(0.9337);transform-origin:0 0;">Save View</div><div class="t" style="left:451.20px;top:325.98px;font-size:21.08px;color:#8c8c8c;transform:scaleX(0.9481);transform-origin:0 0;">Type to search...</div><div class="t" style="left:453.00px;top:402.18px;font-size:21.08px;color:#8c8c8c;letter-spacing:0.033px;">Agent Name</div><div class="t" style="left:946.03px;top:303.54px;font-size:18.31px;color:#8a8a8a;transform:scaleX(0.9677);transform-origin:0 0;">Primary Contact</div><div class="t" style="left:943.90px;top:325.27px;font-size:21.8px;color:#222;transform:scaleX(0.9565);transform-origin:0 0;">All</div><div class="t" style="left:947.00px;top:402.08px;font-size:21.08px;color:#8c8c8c;transform:scaleX(0.9864);transform-origin:0 0;">Agent Code</div><div class="t" style="left:1339.70px;top:323.70px;font-size:22.82px;color:#333;transform:scaleX(0.8989);transform-origin:0 0;">Include Inactive Employees</div><div class="t" style="left:1339.66px;top:400.60px;font-size:22.82px;color:#333;transform:scaleX(0.9181);transform-origin:0 0;">Include Inactive Agents</div><div class="t" style="left:2039.82px;top:326.68px;font-size:22.38px;color:#333;transform:scaleX(0.8920);transform-origin:0 0;">Reset Filter</div><div class="t" style="left:760.87px;top:1215.14px;font-size:21.95px;color:#43474b;transform:scaleX(0.9636);transform-origin:0 0;">Provided with</div><div class="t" style="left:920.07px;top:1215.14px;font-size:21.95px;color:#43474b;transform:scaleX(0.9316);transform-origin:0 0;">by Equator IT in</div><div class="t" style="left:1121.30px;top:1215.14px;font-size:21.95px;color:#43474b;">|</div><div class="t" style="left:1132.35px;top:1215.14px;font-size:21.95px;color:#43474b;transform:scaleX(0.9546);transform-origin:0 0;">Copyright © 2024. All right reserved.</div><div class="t" style="left:552.27px;top:535.94px;font-size:21.37px;color:#959595;transform:scaleX(0.9647);transform-origin:0 0;">First Name</div><div class="t" style="left:700.01px;top:535.94px;font-size:21.37px;color:#959595;transform:scaleX(0.9465);transform-origin:0 0;">Last Name</div><div class="t" style="left:844.64px;top:535.94px;font-size:21.37px;color:#959595;transform:scaleX(0.9822);transform-origin:0 0;">Position</div><div class="t" style="left:966.07px;top:535.94px;font-size:21.37px;color:#959595;transform:scaleX(0.9626);transform-origin:0 0;">Email (Agent Employee)</div><div class="t" style="left:1242.54px;top:535.94px;font-size:21.37px;color:#959595;transform:scaleX(0.9571);transform-origin:0 0;">Code</div><div class="t" style="left:1395.80px;top:535.94px;font-size:21.37px;color:#959595;">Name</div><div class="t" style="left:1843.50px;top:535.94px;font-size:21.37px;color:#959595;transform:scaleX(0.9658);transform-origin:0 0;">Active (Agent ...</div><div class="t" style="left:2011.36px;top:535.94px;font-size:21.37px;color:#959595;transform:scaleX(0.9689);transform-origin:0 0;">Primary Contact</div><div class="t" style="left:1842.54px;top:586.04px;font-size:21.37px;color:#222;transform:scaleX(0.9639);transform-origin:0 0;">(All)</div><div class="t" style="left:2012.34px;top:586.04px;font-size:21.37px;color:#222;transform:scaleX(0.9639);transform-origin:0 0;">(All)</div>
</body></html>
